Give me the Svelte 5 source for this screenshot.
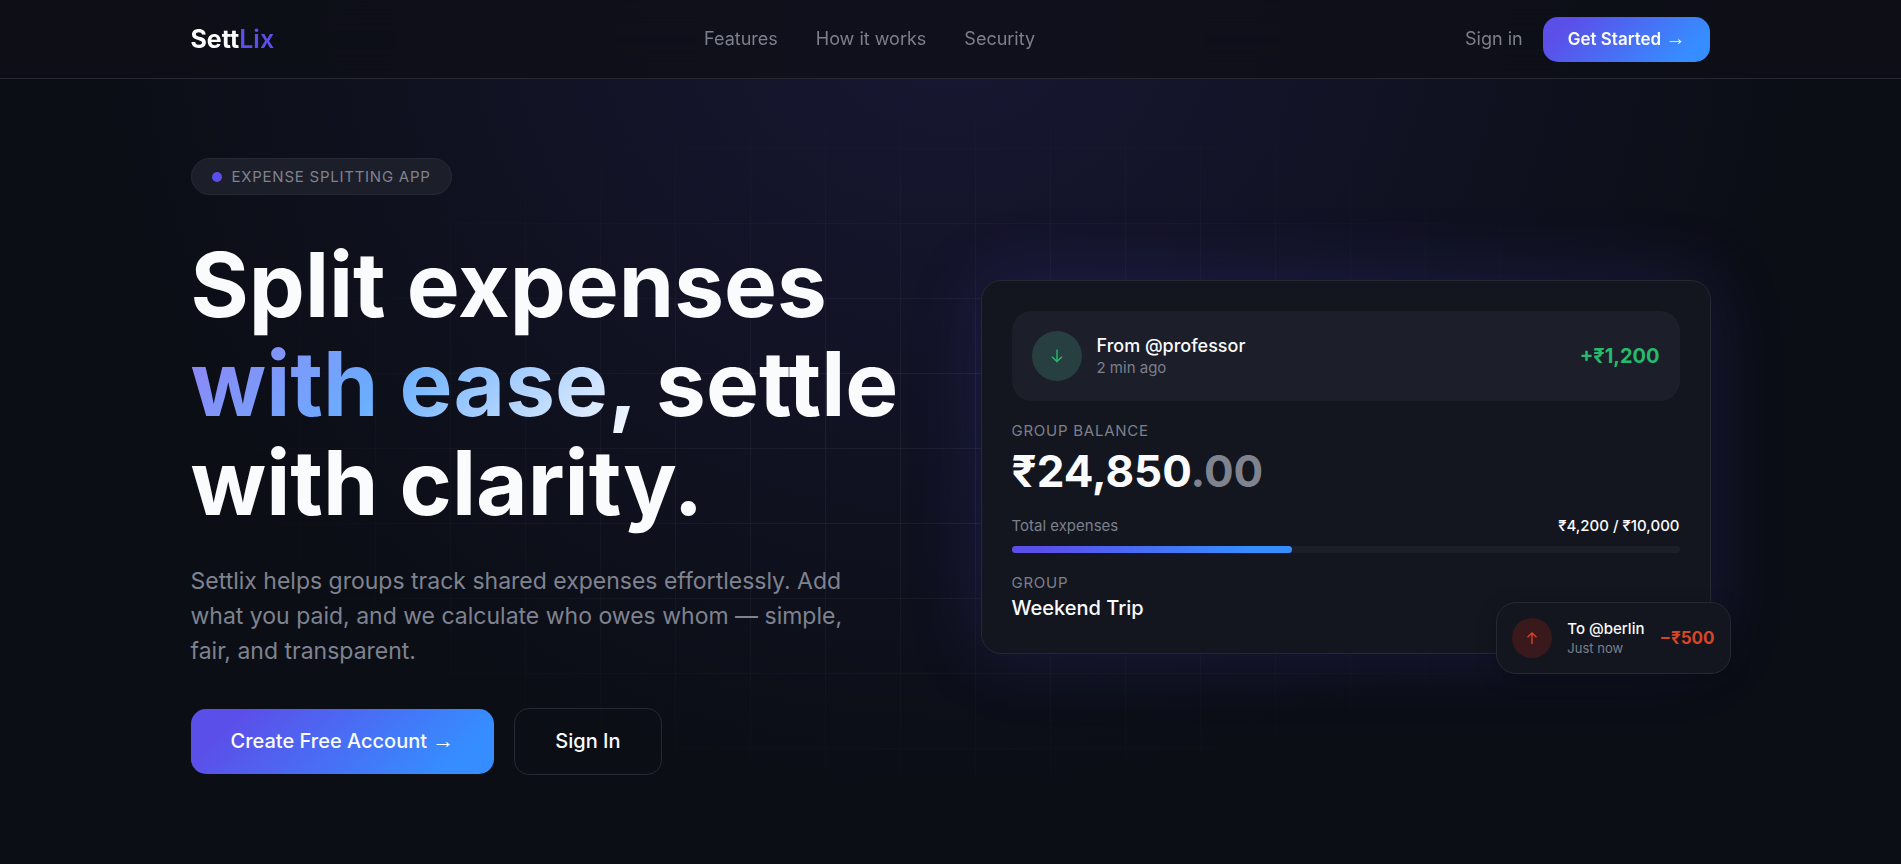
<script>
  // Landing page hero for Settlix
  const navLinks = [
    { label: "Features", href: "#features" },
    { label: "How it works", href: "#how-it-works" },
    { label: "Security", href: "#security" }
  ];

  // Sample group shown in the preview card
  const spent = 4200;
  const budget = 10000;
  const percent = (spent / budget) * 100;

  function money(n) {
    return "₹" + n.toLocaleString("en-US");
  }
</script>

<header class="navbar">
  <div class="container navbar-inner">
    <a class="logo" href="#top">Sett<span>Lix</span></a>
    <nav class="nav-links">
      {#each navLinks as link}
        <a href={link.href}>{link.label}</a>
      {/each}
    </nav>
    <div class="nav-actions">
      <a class="signin" href="#signin">Sign in</a>
      <button class="btn btn-primary btn-small">Get Started <span class="arrow">→</span></button>
    </div>
  </div>
</header>

<main class="hero" id="top">
  <div class="glow"></div>
  <div class="grid-lines"></div>

  <div class="container hero-inner">
    <section class="intro">
      <p class="pill"><span class="dot"></span>EXPENSE SPLITTING APP</p>
      <h1>
        Split expenses<br />
        <span class="gradient-text">with ease,</span> settle<br />
        with clarity.
      </h1>
      <p class="lead">
        Settlix helps groups track shared expenses effortlessly. Add what you
        paid, and we calculate who owes whom — simple, fair, and transparent.
      </p>
      <div class="cta">
        <button class="btn btn-primary">Create Free Account <span class="arrow">→</span></button>
        <button class="btn btn-outline">Sign In</button>
      </div>
    </section>

    <section class="card">
      <div class="transaction">
        <span class="icon icon-in">
          <svg width="14" height="16" viewBox="0 0 14 16">
            <path d="M7 1.5v12M2 8.8l5 4.7 5-4.7" />
          </svg>
        </span>
        <div>
          <p class="name">From @professor</p>
          <p class="muted">2 min ago</p>
        </div>
        <strong class="amount amount-in">+₹1,200</strong>
      </div>

      <p class="label">GROUP BALANCE</p>
      <p class="balance">₹24,850<span>.00</span></p>

      <div class="progress-head">
        <span class="muted">Total expenses</span>
        <span class="total">{money(spent)} / {money(budget)}</span>
      </div>
      <div class="progress">
        <div class="progress-fill" style="width: {percent}%"></div>
      </div>

      <p class="label">GROUP</p>
      <p class="group-name">Weekend Trip</p>

      <!-- Floating transaction -->
      <div class="floating">
        <span class="icon icon-out">
          <svg width="12" height="14" viewBox="0 0 12 14">
            <path d="M6 13V2M1.5 6.2 6 2l4.5 4.2" />
          </svg>
        </span>
        <div>
          <p class="name">To @berlin</p>
          <p class="muted">Just now</p>
        </div>
        <strong class="amount amount-out">−₹500</strong>
      </div>
    </section>
  </div>
</main>

<style>
  :global(body) {
    background: #0b0e15;
    color: #fafbfd;
    font-family: Inter, sans-serif;
  }

  p,
  h1 {
    margin: 0;
  }

  a {
    text-decoration: none;
  }

  .container {
    box-sizing: border-box;
    width: 100%;
    max-width: 1600px;
    margin: 0 auto;
    padding: 0 40px;
  }

  /* === NAVBAR === */
  .navbar {
    position: fixed;
    top: 0;
    left: 0;
    right: 0;
    z-index: 10;
    background: rgba(14, 15, 22, 0.8);
    border-bottom: 1px solid #262833;
    backdrop-filter: blur(20px);
  }

  .navbar-inner {
    display: flex;
    justify-content: space-between;
    align-items: center;
    height: 78px;
  }

  .logo {
    font-size: 25px;
    font-weight: 700;
    color: #fafbfd;
  }

  .logo span {
    color: #5b4fe9;
    font-weight: 600;
  }

  .nav-links {
    display: flex;
    gap: 38px;
  }

  .nav-links a,
  .signin {
    font-size: 18px;
    line-height: 20px;
    color: #7c808d;
  }

  .nav-actions {
    display: flex;
    align-items: center;
    gap: 20px;
  }

  /* === BUTTONS === */
  .btn {
    border: none;
    border-radius: 15px;
    padding: 20px 40px;
    font-family: inherit;
    font-size: 20px;
    font-weight: 500;
    line-height: 25px;
    color: #fafbfd;
    cursor: pointer;
  }

  .btn-primary {
    background: linear-gradient(135deg, #5b4fe9 15%, #368dff 85%);
  }

  .btn-outline {
    background: transparent;
    border: 1px solid #262833;
  }

  .btn-small {
    padding: 10px 25px;
    font-size: 17px;
    font-weight: 600;
  }

  .arrow {
    font-family: "Liberation Sans", sans-serif;
    font-size: 22px;
    font-weight: 400;
    line-height: 1;
  }

  .btn-small .arrow {
    font-size: 20px;
  }

  /* === HERO === */
  .hero {
    position: relative;
    box-sizing: border-box;
    min-height: 100vh;
    padding: 158px 0 88px;
    overflow: hidden;
  }

  .glow,
  .grid-lines {
    position: absolute;
    inset: 0;
    pointer-events: none;
  }

  .glow {
    background: radial-gradient(ellipse 860px 800px at 50% 0, rgba(96, 76, 225, 0.15), transparent);
  }

  .grid-lines {
    background-image:
      linear-gradient(rgba(255, 255, 255, 0.05) 1px, transparent 1px),
      linear-gradient(90deg, rgba(255, 255, 255, 0.05) 1px, transparent 1px);
    background-size: 75px 75px;
    background-position: 0 -2px;
    mask-image: radial-gradient(ellipse 48% 50% at 50% 52%, #000 15%, transparent 90%);
  }

  .hero-inner {
    position: relative;
    display: grid;
    grid-template-columns: 1fr 1fr;
    align-items: center;
    gap: 60px;
  }

  .pill {
    display: inline-flex;
    align-items: center;
    gap: 10px;
    padding: 8px 20px;
    border: 1px solid #262833;
    border-radius: 20px;
    background: #1c1e29;
    color: #7f8390;
    font-size: 15px;
    line-height: 19px;
    letter-spacing: 0.05em;
  }

  .dot {
    width: 10px;
    height: 10px;
    border-radius: 50%;
    background: #5b4fe9;
  }

  h1 {
    margin-top: 40px;
    font-size: 89px;
    font-weight: 700;
    line-height: 99px;
    white-space: nowrap;
  }

  .gradient-text {
    background: linear-gradient(135deg, #9181f4 0%, #6aaeff 45%, #fafbfd 100%);
    background-clip: text;
    color: transparent;
  }

  .lead {
    max-width: 680px;
    margin-top: 32px;
    color: #7f8390;
    font-size: 23px;
    line-height: 35px;
  }

  .cta {
    display: flex;
    align-items: center;
    gap: 20px;
    margin-top: 39px;
  }

  /* === PREVIEW CARD === */
  .card {
    position: relative;
    padding: 30px;
    border: 1px solid #262833;
    border-radius: 20px;
    background: #13161e;
    box-shadow: 0 0 75px rgba(91, 79, 233, 0.18);
  }

  .transaction {
    display: flex;
    align-items: center;
    gap: 15px;
    padding: 20px;
    border-radius: 20px;
    background: #1c1e29;
  }

  .icon {
    display: flex;
    align-items: center;
    justify-content: center;
    width: 50px;
    height: 50px;
    border-radius: 50%;
  }

  .icon svg {
    fill: none;
    stroke: currentColor;
    stroke-width: 1.4;
  }

  .icon-in {
    background: #283f42;
    color: #26ba6c;
  }

  .icon-out {
    width: 40px;
    height: 40px;
    background: #3a191d;
    color: #d64524;
  }

  .name {
    font-size: 18px;
    font-weight: 500;
    line-height: 24px;
  }

  .muted {
    color: #7c808d;
    font-size: 15px;
    line-height: 20px;
  }

  .amount {
    margin-left: auto;
    font-size: 20px;
    font-weight: 700;
  }

  .amount-in {
    color: #26ba6c;
  }

  .amount-out {
    color: #d64524;
  }

  .label {
    margin-top: 20px;
    color: #7c808d;
    font-size: 15px;
    line-height: 20px;
    letter-spacing: 0.05em;
  }

  .balance {
    font-size: 44px;
    font-weight: 700;
    line-height: 60px;
  }

  .balance span {
    color: #7f8390;
  }

  .progress-head {
    display: flex;
    justify-content: space-between;
    align-items: center;
    margin-top: 15px;
  }

  .total {
    font-size: 15px;
    font-weight: 500;
    line-height: 20px;
  }

  .progress {
    height: 7px;
    margin-top: 10px;
    border-radius: 4px;
    background: #1c1e29;
  }

  .progress-fill {
    height: 100%;
    border-radius: 4px;
    background: linear-gradient(90deg, #5b4fe9 10%, #368dff 85%);
  }

  .group-name {
    font-size: 20px;
    font-weight: 500;
    line-height: 30px;
  }

  .floating {
    position: absolute;
    right: -21px;
    bottom: -21px;
    display: flex;
    align-items: center;
    gap: 15px;
    padding: 15px;
    border: 1px solid #262833;
    border-radius: 20px;
    background: #13161e;
    box-shadow: 0 5px 20px rgba(0, 0, 0, 0.25);
  }

  .floating .name {
    font-size: 15px;
    line-height: 20px;
  }

  .floating .muted {
    font-size: 13px;
    line-height: 18px;
  }

  .floating .amount {
    font-size: 17px;
  }
</style>
